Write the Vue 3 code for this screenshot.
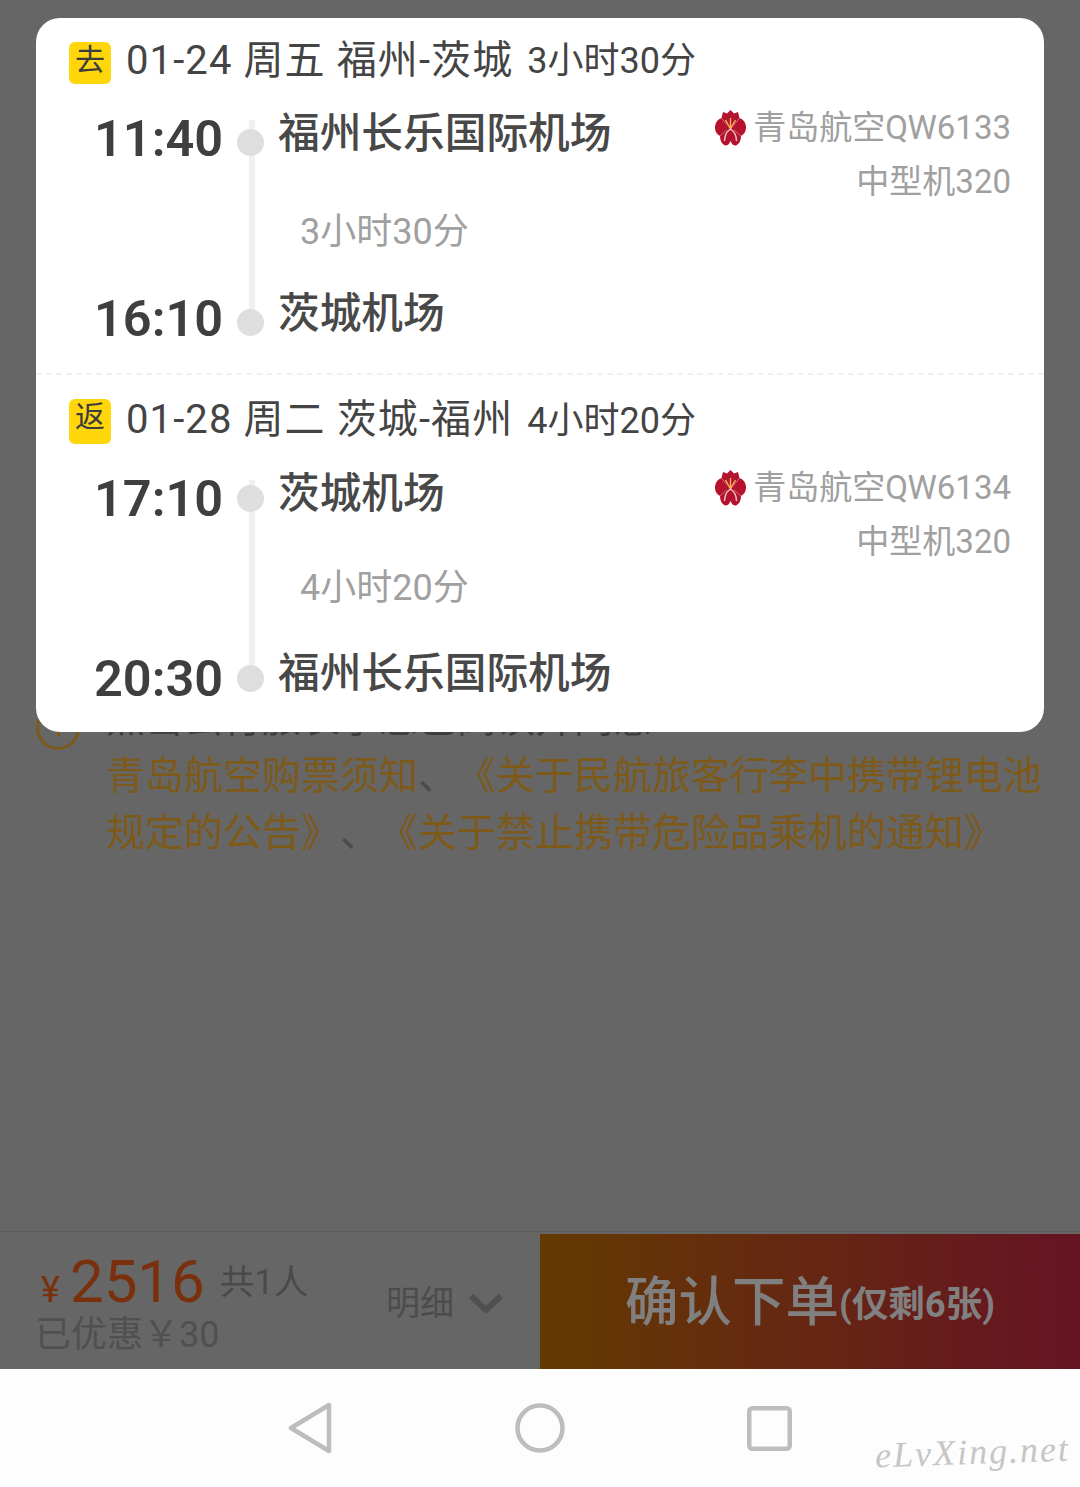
<script setup>
const flights = [
  {
    id: "go",
    tag: "去",
    date: "01-24 周五 福州-茨城",
    total: "3小时30分",
    dep: "11:40",
    arr: "16:10",
    from: "福州长乐国际机场",
    to: "茨城机场",
    no: "青岛航空QW6133",
    plane: "中型机320",
  },
  {
    id: "back",
    tag: "返",
    date: "01-28 周二 茨城-福州",
    total: "4小时20分",
    dep: "17:10",
    arr: "20:30",
    from: "茨城机场",
    to: "福州长乐国际机场",
    no: "青岛航空QW6134",
    plane: "中型机320",
  },
];
</script>

<template>
  <div class="page">
    <div class="notice">
      <div class="info-mark"><span class="info-stem"></span></div>
      <div class="notice-text">
        <div class="agree">点击云行旅表示您已阅读并同意</div>
        <div class="line">
          <span class="link">青岛航空购票须知</span><span class="sep">、</span><span class="link">《关于民航旅客行李中携带锂电池</span>
        </div>
        <div class="line">
          <span class="link">规定的公告》</span><span class="sep">、</span><span class="link">《关于禁止携带危险品乘机的通知》</span>
        </div>
      </div>
    </div>

    <div class="bar">
      <div class="price-box">
        <div class="price-row">
          <span class="yen">¥</span><span class="amount">2516</span><span class="people">共1人</span>
        </div>
        <div class="saved">已优惠￥30</div>
      </div>
      <div class="detail">
        <span>明细</span>
        <svg width="36" height="24" viewBox="0 0 36 24" class="chev">
          <path d="M3 5 L18 19 L33 5" fill="none" stroke="#505050" stroke-width="6" />
        </svg>
      </div>
      <div class="confirm">
        <span class="confirm-main">确认下单</span><span class="confirm-sub">(仅剩6张)</span>
      </div>
    </div>

    <div class="nav">
      <svg width="46" height="52" viewBox="0 0 46 52">
        <path d="M42 3 L42 49 L4 26 Z" fill="none" stroke="#bdbdbd" stroke-width="4.5" stroke-linejoin="round" />
      </svg>
      <svg width="50" height="50" viewBox="0 0 50 50">
        <circle cx="25" cy="25" r="22.5" fill="none" stroke="#bdbdbd" stroke-width="4.5" />
      </svg>
      <svg width="45" height="45" viewBox="0 0 45 45">
        <rect x="2.25" y="2.25" width="40.5" height="40.5" rx="3" fill="none" stroke="#bdbdbd" stroke-width="4.5" />
      </svg>
      <span class="mark">eLvXing.net</span>
    </div>

    <div class="sheet">
      <section v-for="f in flights" :key="f.id" class="flight" :class="f.id">
        <div class="head">
          <span class="tag">{{ f.tag }}</span>
          <span class="date">{{ f.date }}</span>
          <span class="total">{{ f.total }}</span>
        </div>
        <div class="leg">
          <div class="rail"></div>
          <div class="stop">
            <span class="time">{{ f.dep }}</span>
            <span class="dot"></span>
            <span class="port">{{ f.from }}</span>
            <div class="carrier">
              <div class="carrier-row">
                <svg class="logo" width="31" height="36" viewBox="0 0 31 36">
                  <path fill="#b5122e" d="M15.5 0 L19 3.500 L23 2 Q24 6 24.500 8 Q30 10 31 16 Q31.500 23 26 26 Q26 33 21 35.500 Q17.500 36 15.500 31 Q13.500 36 10 35.500 Q5 33 5 26 Q-0.500 23 0 16 Q1 10 6.500 8 Q7 6 8 2 L12 3.500 Z" />
                  <path fill="none" stroke="#ffffff" stroke-opacity="0.45" stroke-width="0.8" d="M6.500 8 Q10 14 15.500 17 Q21 14 24.500 8 M5 26 L12 20 M26 26 L19 20" />
                  <path fill="none" stroke="#f0b060" stroke-width="1.400" d="M10.500 10 L15.500 19 L20.500 10 M15.500 8 L15.500 19" />
                  <path fill="none" stroke="#f3c9c9" stroke-width="1.400" d="M15.500 19 Q9.500 23 9.500 31 M15.500 19 Q21.500 23 21.500 31" />
                </svg>
                <span>{{ f.no }}</span>
              </div>
              <div>{{ f.plane }}</div>
            </div>
          </div>
          <div class="mid">{{ f.total }}</div>
          <div class="stop">
            <span class="time">{{ f.arr }}</span>
            <span class="dot"></span>
            <span class="port">{{ f.to }}</span>
          </div>
        </div>
      </section>
    </div>
  </div>
</template>

<style scoped>
.page {
  position: relative;
  width: 1080px;
  height: 1487px;
  overflow: hidden;
  display: flex;
  flex-direction: column;
  background: #666666;
  font-family: Roboto, "Noto Sans CJK SC", sans-serif;
}
.notice {
  display: flex;
  flex: 1;
  padding: 691px 0 0 36px;
  gap: 26px;
  font-size: 39px;
  line-height: 57px;
  color: #7d5a1a;
  text-spacing-trim: space-all;
}
.info-mark {
  width: 44px;
  height: 44px;
  margin-top: 15px;
  flex-shrink: 0;
  border: 3px solid #7d5a1a;
  border-radius: 50%;
  box-sizing: border-box;
  display: flex;
  justify-content: center;
  align-items: flex-end;
  padding-bottom: 11px;
}
.info-stem {
  width: 3px;
  height: 10px;
  background: #7d5a1a;
}
.line {
  white-space: nowrap;
}
.agree {
  color: #3d3d3d;
}
.sep {
  color: #4b4b4b;
}
.bar {
  height: 138px;
  flex-shrink: 0;
  display: flex;
  border-top: 1px solid #5c5c5c;
  box-sizing: border-box;
}
.price-box {
  width: 350px;
  padding: 17px 0 0 35px;
  box-sizing: border-box;
}
.price-row {
  display: flex;
  align-items: baseline;
  height: 66px;
}
.yen {
  color: #7a300c;
  font-size: 36px;
  margin: 0 10px 0 6px;
}
.amount {
  color: #7a300c;
  font-size: 60px;
  line-height: 66px;
}
.people {
  color: #4a4a4a;
  font-size: 34.500px;
  margin-left: 15px;
  position: relative;
  top: -8px;
}
.saved {
  color: #505050;
  font-size: 36px;
  line-height: 42px;
  margin-top: -1px;
}
.detail {
  width: 190px;
  box-sizing: border-box;
  padding-left: 36px;
  display: flex;
  align-items: center;
  gap: 14px;
  color: #4c4c4c;
  font-size: 34px;
}
.chev {
  margin-top: 4px;
}
.confirm {
  flex: 1;
  margin-top: 2px;
  padding-bottom: 8px;
  background: linear-gradient(90deg, #643a02, #661323);
  display: flex;
  justify-content: center;
  align-items: center;
  color: #808080;
  font-weight: 500;
}
.confirm-main {
  font-size: 53.500px;
}
.confirm-sub {
  font-size: 36.500px;
  margin-top: 8px;
  font-weight: 700;
}
.nav {
  position: relative;
  height: 118px;
  flex-shrink: 0;
  background: #fdfdfd;
  display: flex;
  justify-content: center;
  align-items: center;
  gap: 182px;
  padding-right: 2px;
  box-sizing: border-box;
}
.mark {
  position: absolute;
  right: 10px;
  top: 63px;
  font-family: "Liberation Serif", serif;
  font-style: italic;
  font-size: 36px;
  line-height: 40px;
  letter-spacing: 2px;
  color: #c6c6c6;
  transform: rotate(-2deg);
}
.sheet {
  position: absolute;
  left: 36px;
  top: 18px;
  width: 1008px;
  height: 714px;
  background: #ffffff;
  border-radius: 24px;
}
.flight {
  padding-top: 24px;
}
.flight.go {
  height: 357px;
  box-sizing: border-box;
  border-bottom: 2px dashed #f0f0f0;
}
.head {
  display: flex;
  align-items: flex-start;
  height: 42px;
  padding-left: 33px;
}
.back .head {
  height: 45px;
}
.tag {
  width: 42px;
  height: 100%;
  border-radius: 6px;
  background: #ffd60a;
  color: #3c3c3c;
  font-size: 30px;
  line-height: 36px;
  text-align: center;
}
.date {
  margin-left: 15px;
  font-size: 40px;
  line-height: 38px;
  letter-spacing: 1.100px;
  color: #444444;
  white-space: pre;
}
.total {
  margin-left: 14px;
  font-size: 36px;
  line-height: 38px;
  color: #444444;
}
.back .date {
  margin-top: 2px;
}
.back .total {
  margin-top: 3px;
}
.leg {
  position: relative;
  margin-top: 24px;
  padding-left: 59px;
}
.rail {
  position: absolute;
  left: 213px;
  top: 12px;
  width: 6px;
  height: 202px;
  background: #f0f0f0;
}
.back .rail {
  height: 198px;
}
.stop {
  position: relative;
  height: 60px;
  display: flex;
  align-items: flex-start;
}
.time {
  width: 127px;
  font-size: 50.500px;
  font-weight: 600;
  line-height: 62px;
  color: #3f3f3f;
  margin-left: -1px;
  margin-right: 1px;
}
.dot {
  width: 27px;
  height: 27px;
  margin: 21px 15px 0;
  border-radius: 50%;
  background: #dedede;
}
.back .dot {
  margin-top: 17px;
}
.port {
  font-size: 41.700px;
  line-height: 52px;
  color: #484848;
  font-weight: 500;
  margin-left: -1px;
}
.carrier {
  margin-left: auto;
  margin-top: -7px;
  padding-right: 33px;
  text-align: right;
  font-size: 33px;
  line-height: 54px;
  color: #a0a0a0;
}
.carrier-row {
  display: flex;
  align-items: center;
  justify-content: flex-end;
  gap: 7px;
}
.mid {
  height: 120px;
  box-sizing: border-box;
  padding: 44px 0 0 205px;
  font-size: 36px;
  line-height: 40px;
  color: #a0a0a0;
}
.back .mid {
  padding-top: 40px;
}
</style>
